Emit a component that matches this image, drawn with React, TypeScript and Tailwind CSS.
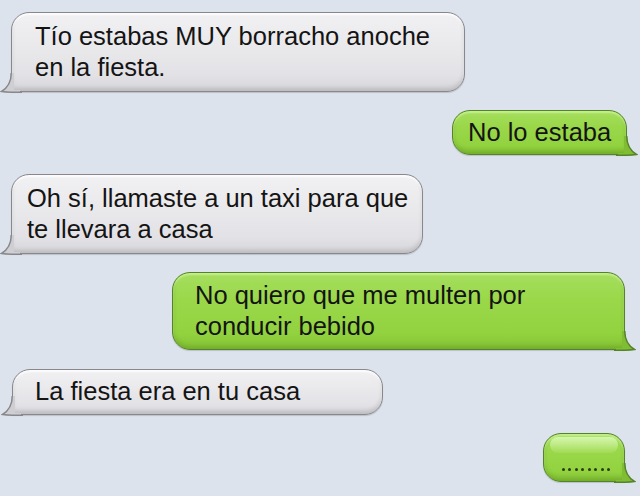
import React from "react";

const greyBubble =
  "relative rounded-[18px] rounded-bl-[0px] border-[1.5px] border-[#88888c] bg-[linear-gradient(180deg,#f1f0f3_0%,#e9e8eb_45%,#e2e1e5_80%,#d6d6da_100%)] shadow-[inset_0_-3px_4px_rgba(0,0,0,0.12),inset_0_2px_2px_rgba(255,255,255,0.9),0_1px_1px_rgba(0,0,0,0.15)]";
const greenBubble =
  "relative rounded-[18px] rounded-br-[0px] border-[1.5px] border-[#54832b] bg-[linear-gradient(180deg,#a6de5e_0%,#9ad84a_35%,#92d23f_80%,#84c234_100%)] shadow-[inset_0_-3px_4px_rgba(40,80,0,0.18),inset_0_2px_2px_rgba(220,255,180,0.6),0_1px_1px_rgba(0,0,0,0.15)]";

function GreyTail() {
  return (
    <svg
      className="absolute left-[-12px] bottom-[-1.5px]"
      width="24"
      height="20"
      viewBox="0 0 24 20"
    >
      <path
        d="M11.25 0 C11.25 9 8 14.5 1.5 18.5 C8 19.6 14 19.25 20 19.25 L20 17 L14 17 L14 0 Z"
        fill="#cfcfd3"
      />
      <path
        d="M11.25 0 C11.25 9 8 14.5 1.5 18.5 C8 19.6 14 19.25 22 19.25"
        fill="none"
        stroke="#88888c"
        strokeWidth="1.5"
      />
    </svg>
  );
}

function GreenTail() {
  return (
    <svg
      className="absolute right-[-12px] bottom-[-1.5px]"
      width="24"
      height="20"
      viewBox="0 0 24 20"
    >
      <path
        d="M12.75 0 C12.75 9 16 14.5 22.5 18.5 C16 19.6 10 19.25 4 19.25 L4 17 L10 17 L10 0 Z"
        fill="#80bd32"
      />
      <path
        d="M12.75 0 C12.75 9 16 14.5 22.5 18.5 C16 19.6 10 19.25 2 19.25"
        fill="none"
        stroke="#54832b"
        strokeWidth="1.5"
      />
    </svg>
  );
}

export default function App() {
  return (
    <div
      className="w-[640px] h-[496px] overflow-hidden bg-[#dde3ec] flex flex-col text-[#141414]"
      style={{ fontFamily: '"Liberation Sans", Arial, sans-serif' }}
    >
      {/* 1 */}
      <div className={`${greyBubble} mt-[12px] ml-[11px] w-[454px] h-[80px] pl-[23px] pt-[8px] text-[25.5px] leading-[31px]`}>
        <GreyTail />
        <div className="relative">Tío estabas MUY borracho anoche<br />en la fiesta.</div>
      </div>

      {/* 2 */}
      <div className={`${greenBubble} self-end mt-[18px] mr-[13px] w-[175px] h-[45px] pl-[15px] pt-[6px] text-[25.5px] leading-[31px]`}>
        <GreenTail />
        <div className="relative">No lo estaba</div>
      </div>

      {/* 3 */}
      <div className={`${greyBubble} mt-[19px] ml-[11px] w-[412px] h-[80px] pl-[15px] pt-[8px] text-[25.5px] leading-[31px]`}>
        <GreyTail />
        <div className="relative whitespace-nowrap">Oh sí, llamaste a un taxi para que<br />te llevara a casa</div>
      </div>

      {/* 4 */}
      <div className={`${greenBubble} self-end mt-[18px] mr-[15px] w-[453px] h-[78px] pl-[22px] pt-[7px] text-[25.5px] leading-[31px]`}>
        <GreenTail />
        <div className="relative">No quiero que me multen por<br />conducir bebido</div>
      </div>

      {/* 5 */}
      <div className={`${greyBubble} mt-[19px] ml-[12px] w-[371px] h-[46px] pl-[22px] pt-[6px] text-[25.5px] leading-[31px]`}>
        <GreyTail />
        <div className="relative">La fiesta era en tu casa</div>
      </div>

      {/* 6 */}
      <div className={`${greenBubble} self-end mt-[18px] mr-[15px] w-[82px] h-[49px] flex items-end justify-center pb-[10px]`}>
        <div className="absolute left-[6px] right-[6px] top-[3px] h-[16px] rounded-[12px] bg-[linear-gradient(180deg,rgba(230,255,200,0.75),rgba(200,240,150,0.15))]" />
        <GreenTail />
        <div className="relative flex gap-[3.5px] ml-[4px]">
          {Array.from({ length: 8 }).map((_, i) => (
            <span key={i} className="block w-[3px] h-[3px] rounded-full bg-[#2a3a18]" />
          ))}
        </div>
      </div>
    </div>
  );
}
